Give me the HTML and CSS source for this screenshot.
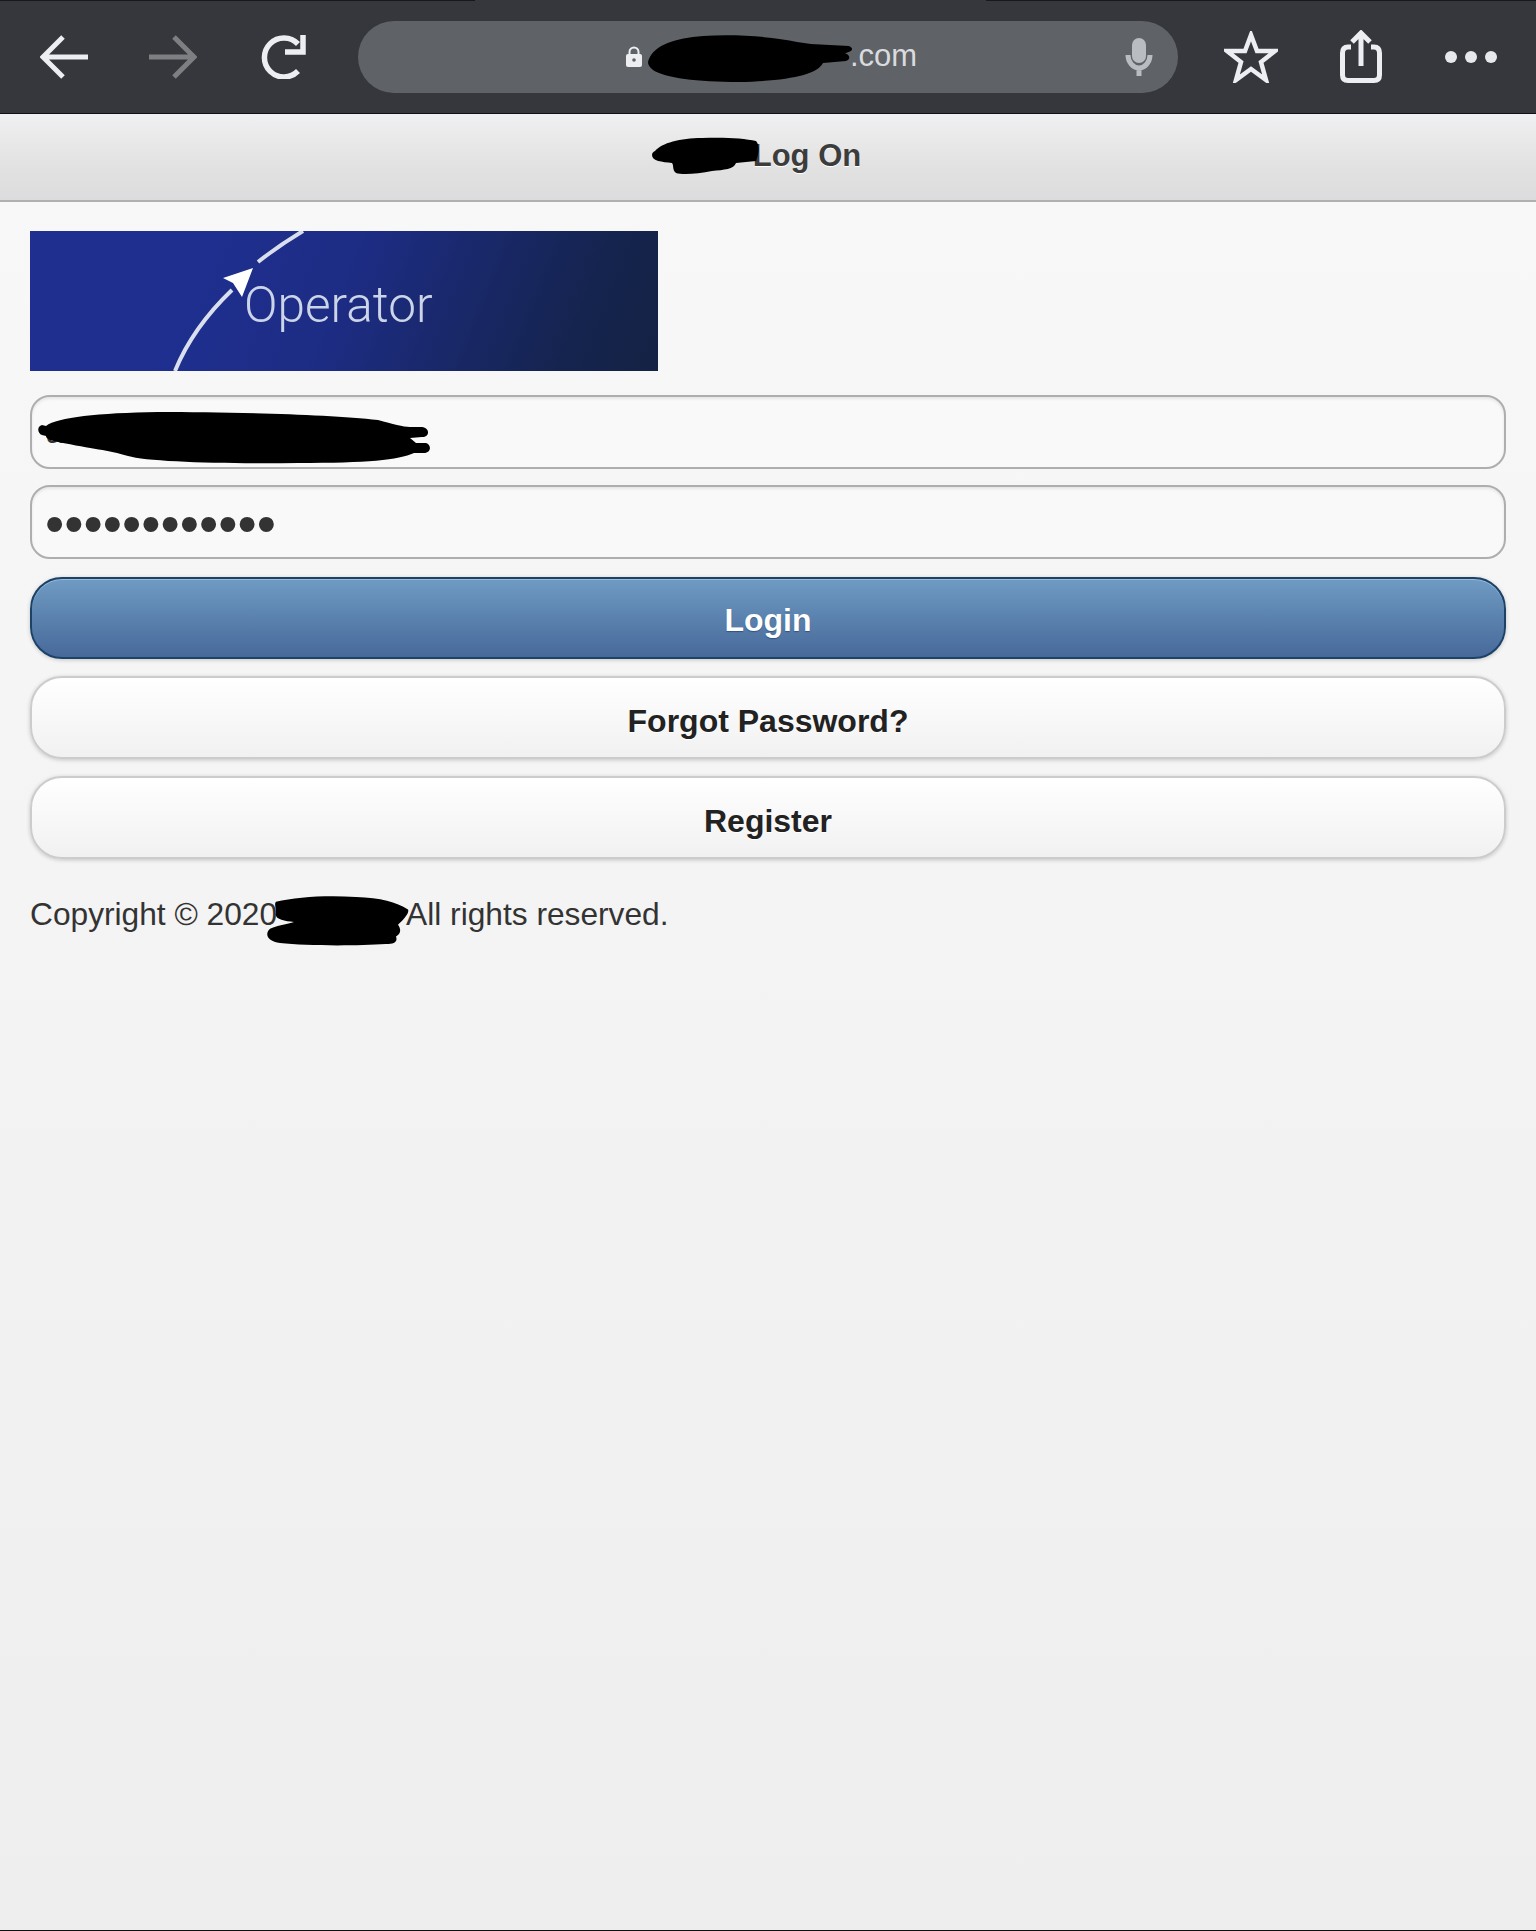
FILE: index.html
```html
<!DOCTYPE html>
<html>

<head>
    <meta charset="utf-8">
    <title>Log On</title>
    <link rel="stylesheet" href="styles.css">
</head>

<body>
    <div class="toolbar">
        <div class="nav-icons">
            <svg class="icon-nav" viewBox="0 0 48 44"><path d="M23 2 3 22 23 42M3 22H48" /></svg>
            <svg class="icon-nav dim" viewBox="0 0 48 44"><path d="M25 2 45 22 25 42M45 22H0" /></svg>
            <svg class="icon-nav reload" viewBox="0 0 48 44"><path d="M40 9A19.500 19.500 0 1 0 40 36M27 17H45V0" /></svg>
        </div>
        <div class="url-pill">
            <div class="url-center">
                <svg class="icon-lock" viewBox="0 0 16 21"><path class="lock-body" d="M2 8h12a2 2 0 0 1 2 2v9a2 2 0 0 1-2 2H2a2 2 0 0 1-2-2v-9a2 2 0 0 1 2-2Z" /><path class="lock-hook" d="M3.500 9V6a4.500 4.500 0 0 1 9 0v3" /><circle class="lock-hole" cx="8" cy="14" r="1.800" /></svg>
                <div class="url-text">.com</div>
                <svg class="blot blot-url" viewBox="0 0 206 48"><path d="M2 24C8 10 28 3 56 1 92 -1 128 2 150 7L164 9 202 11C207 13 206 17 198 18 203 20 204 24 199 26L176 28C170 40 140 46 92 47 50 47 18 43 6 35 1 31 0 28 2 24Z" /></svg>
            </div>
            <svg class="icon-mic" viewBox="0 0 28 38"><rect x="7" y="0" width="14" height="25" rx="7" /><path d="M3 17C3 24 8 30 14 30S25 24 25 17M14 30V38" /></svg>
        </div>
        <div class="action-icons">
            <svg class="icon-star" viewBox="0 0 54 52"><path d="M27 4 33 20 51 20 37 31 42 49 27 38 12 49 17 31 3 20 21 20Z" /></svg>
            <svg class="icon-share" viewBox="0 0 42 53"><path d="M11 17H8Q2.500 17 2.500 23V45Q2.500 50.500 8 50.500H34Q39.500 50.500 39.500 45V23Q39.500 17 34 17H31M21 36V3M12 12 21 3 30 12" /></svg>
            <div class="dots"><span></span><span></span><span></span></div>
        </div>
    </div>

    <div class="page-header">
        <div class="header-title">
            Log On
            <svg class="blot blot-header" viewBox="0 0 108 38"><path d="M3 14C10 6 28 1 50 1 70 0 92 1 104 4 108 8 107 17 104 24L84 26C82 32 72 33 60 34 46 37 30 38 24 36 20 33 22 28 20 26 10 25 0 24 0 18 0 16 1 15 3 14Z" /></svg>
        </div>
    </div>

    <div class="content">
        <div class="logo">
            <svg class="logo-art" viewBox="0 0 628 140">
                <path class="logo-line" d="M145 140C158 108 178 82 202 59" />
                <path class="logo-line" d="M228 31C243 19 258 9 273 0" />
                <path class="logo-arrow" d="M193 47 223 37 212 66 203 52Z" />
                <text class="logo-text" x="214" y="91">Operator</text>
            </svg>
        </div>

        <div class="field">
            <input class="text-input" type="text" value="a">
            <svg class="blot blot-user" viewBox="0 0 392 52"><path d="M8 14C20 5 60 1 120 0 190 0 290 2 340 8 355 12 365 15 372 15L384 15C392 16 392 25 384 25L372 26 378 31 388 31C394 33 393 41 386 41L376 41C360 48 330 51 260 51 190 52 110 50 90 44 70 38 55 37 20 30 10 28 8 26 8 24L4 23C-1 21 -1 14 4 13Z" /></svg>
        </div>
        <input class="text-input dots-input" type="password" value="123456789012">

        <a class="btn btn-primary" href="#">Login</a>
        <a class="btn" href="#">Forgot Password?</a>
        <a class="btn" href="#">Register</a>

        <p class="copyright">
            Copyright &copy; 2020<span class="gap"></span>All rights reserved.
            <svg class="blot blot-copy" viewBox="0 0 144 52" preserveAspectRatio="none"><path d="M10 6C30 1 60 -1 90 1 115 2 130 6 142 14 144 18 136 26 132 30 136 36 134 40 130 42 132 48 128 50 120 50 90 52 40 52 14 49 2 47 -2 40 4 34 10 31 22 29 28 27 18 26 8 24 10 18 10 12 8 8 10 6Z" /></svg>
        </p>
    </div>
</body>

</html>
```

FILE: styles.css
```css
* {
    box-sizing: border-box;
}

html {
    height: 100%;
}

body {
    margin: 0;
    min-height: 1931px;
    font-family: "Liberation Sans", Arial, sans-serif;
    background:
        linear-gradient(#111, #111) bottom / 100% 1px no-repeat,
        linear-gradient(#f9f9f9, #eeeeee);
    color: #333;
}

/* browser bar */
.toolbar {
    height: 114px;
    background:
        linear-gradient(90deg, #17181c 475px, transparent 475px, transparent 986px, #17181c 986px) top / 100% 1px no-repeat,
        #36373c;
    border-bottom: 1px solid #101114;
    display: flex;
    align-items: center;
    padding: 0 37px 0 40px;
}

.nav-icons {
    display: flex;
    gap: 61px;
    width: 318px;
}

.icon-nav {
    width: 48px;
    height: 44px;
    flex: none;
    fill: none;
    stroke: #eceef1;
    stroke-width: 5;
}

.icon-nav.dim {
    stroke: #7e7f82;
}

.icon-nav.reload {
    stroke-width: 5.500;
}

.url-pill {
    width: 820px;
    height: 72px;
    border-radius: 36px;
    background-color: #5f6267;
    display: flex;
    align-items: center;
    justify-content: flex-end;
    padding-right: 25px;
    position: relative;
}

.url-center {
    position: absolute;
    left: 268px;
    top: 0;
    height: 72px;
    width: 300px;
    display: flex;
    align-items: center;
}

.icon-lock {
    width: 16px;
    height: 21px;
    flex: none;
}

.lock-body {
    fill: #eceef1;
}

.lock-hook {
    fill: none;
    stroke: #eceef1;
    stroke-width: 2;
}

.lock-hole {
    fill: #5f6267;
}

.url-text {
    font-size: 31px;
    color: #d9dbde;
    margin-left: 208px;
    padding-bottom: 2px;
}

.icon-mic {
    width: 28px;
    height: 38px;
    fill: #b9bdc1;
    stroke: none;
}

.icon-mic path {
    fill: none;
    stroke: #b9bdc1;
    stroke-width: 5;
}

.action-icons {
    display: flex;
    align-items: center;
    margin-left: 46px;
}

.icon-star {
    width: 54px;
    height: 52px;
    fill: none;
    stroke: #eceef1;
    stroke-width: 4.500;
    margin-right: 62px;
}

.icon-share {
    width: 42px;
    height: 53px;
    fill: none;
    stroke: #eceef1;
    stroke-width: 5;
    margin-right: 63px;
}

.dots {
    display: flex;
    gap: 8px;
}

.dots span {
    width: 12px;
    height: 12px;
    border-radius: 50%;
    background-color: #e6e8eb;
}

/* page header */
.page-header {
    height: 88px;
    background: linear-gradient(#f0f0f2, #e2e2e2 60%, #dcdcde);
    border-bottom: 2px solid #b0b0b0;
    display: flex;
    align-items: center;
    justify-content: center;
    padding: 0 0 2px 78px;
}

.header-title {
    font-size: 31px;
    font-weight: bold;
    color: #3c3c3c;
    text-shadow: 0 1px 0 #fff;
    position: relative;
}

/* redaction scribbles */
.blot {
    position: absolute;
    fill: #000;
}

.blot-url {
    width: 206px;
    height: 48px;
    left: 21px;
    top: 14px;
}

.blot-header {
    width: 108px;
    height: 38px;
    left: -101px;
    top: -1px;
}

.blot-user {
    width: 392px;
    height: 52px;
    left: 8px;
    top: 17px;
}

.blot-copy {
    width: 144px;
    height: 50px;
    left: 236px;
    top: 0;
}

/* login form */
.content {
    padding: 29px 30px 0;
    display: flex;
    flex-direction: column;
}

.logo {
    width: 628px;
    height: 140px;
    background: linear-gradient(112deg, #1f2f90 25%, #1d2c83 50%, #15244f 85%, #142244);
    margin-bottom: 24px;
}

.logo-art {
    display: block;
    width: 628px;
    height: 140px;
}

.logo-line {
    fill: none;
    stroke: #d9dfec;
    stroke-width: 4;
}

.logo-arrow {
    fill: #fff;
}

.logo-text {
    font-family: Roboto, "Liberation Sans", sans-serif;
    font-weight: 300;
    font-size: 49.500px;
    fill: #ccd5e8;
}

.field {
    position: relative;
    margin-bottom: 16px;
}

.text-input {
    display: block;
    width: 100%;
    height: 74px;
    border: 2px solid #aeaeae;
    border-radius: 20px;
    background-color: #f9f9f9;
    box-shadow: inset 0 2px 3px rgba(0, 0, 0, 0.08);
    font-family: "Liberation Sans", Arial, sans-serif;
    font-size: 32px;
    color: #333;
    padding: 0 14px;
    outline: none;
}

.dots-input {
    font-size: 55px;
    padding: 4px 13px 0;
    margin-bottom: 18px;
}

.btn {
    display: flex;
    align-items: center;
    justify-content: center;
    height: 83px;
    padding-top: 7px;
    margin-bottom: 17px;
    border: 2px solid #cccccc;
    border-radius: 32px;
    background: linear-gradient(#ffffff, #f1f1f1);
    box-shadow: 0 1px 4px rgba(0, 0, 0, 0.2);
    font-size: 32px;
    font-weight: bold;
    color: #222;
    text-decoration: none;
    text-shadow: 0 1px 0 #fff;
}

.btn-primary {
    height: 82px;
    padding-top: 5px;
    border-color: #1d4268;
    background: linear-gradient(#6f9bc3, #47699a);
    box-shadow: inset 0 1px 0 #9dbcd8, 0 1px 4px rgba(0, 0, 0, 0.2);
    color: #fff;
    text-shadow: 0 1px 1px #2f5480;
}

.copyright {
    position: relative;
    margin: 20px 0 0;
    font-size: 31.700px;
    line-height: 37px;
    color: #333;
}

.gap {
    display: inline-block;
    width: 129px;
}
```
